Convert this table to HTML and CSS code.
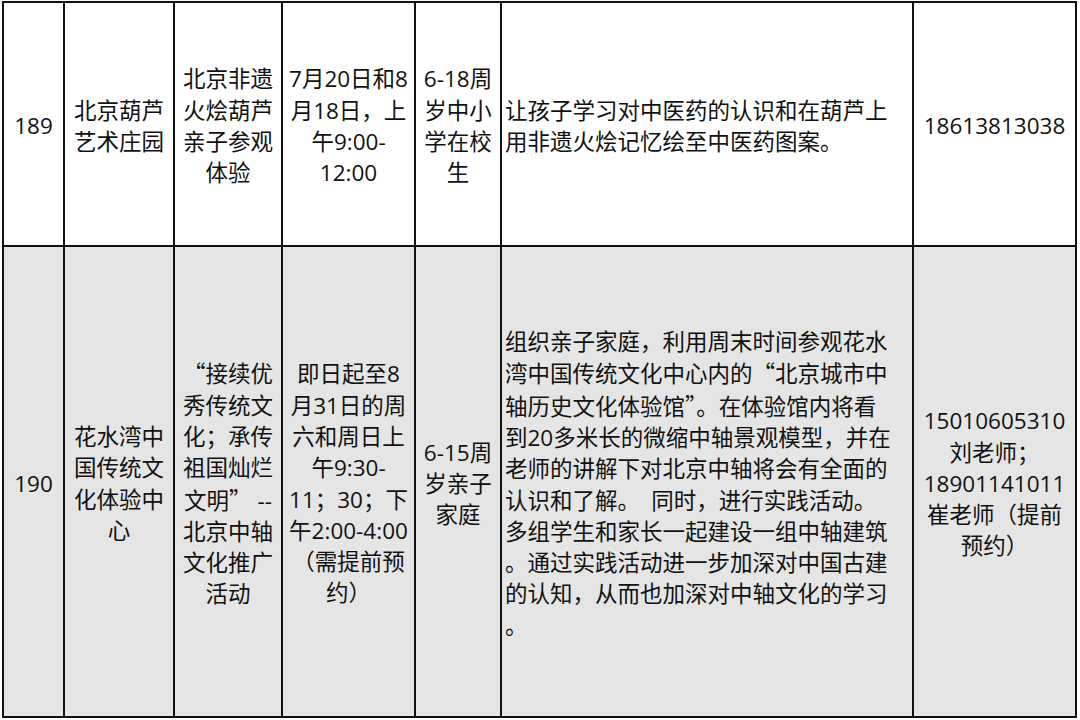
FILE: index.html
```html
<!DOCTYPE html>
<html lang="zh-CN">
<head>
<meta charset="utf-8">
<title>活动列表</title>
<link rel="stylesheet" href="styles.css">
</head>
<body>
<div class="sheet">
  <div class="cell"><div class="txt">189</div></div>
  <div class="cell"><div class="txt">北京葫芦<br>艺术庄园</div></div>
  <div class="cell"><div class="txt">北京非遗<br>火烩葫芦<br>亲子参观<br>体验</div></div>
  <div class="cell"><div class="txt">7月20日和8<br>月18日，上<br>午9:00-<br>12:00</div></div>
  <div class="cell"><div class="txt">6-18周<br>岁中小<br>学在校<br>生</div></div>
  <div class="cell left"><div class="txt">让孩子学习对中医药的认识和在葫芦上<br>用非遗火烩记忆绘至中医药图案。</div></div>
  <div class="cell"><div class="txt">18613813038</div></div>

  <div class="cell alt"><div class="txt">190</div></div>
  <div class="cell alt"><div class="txt">花水湾中<br>国传统文<br>化体验中<br>心</div></div>
  <div class="cell alt"><div class="txt"><span class="q">“</span>接续优<br>秀传统文<br>化；承传<br>祖国灿烂<br>文明<span class="q">”</span> --<br>北京中轴<br>文化推广<br>活动</div></div>
  <div class="cell alt"><div class="txt">即日起至8<br>月31日的周<br>六和周日上<br>午9:30-<br>11；30；下<br>午2:00-4:00<br>（需提前预<br>约）</div></div>
  <div class="cell alt"><div class="txt">6-15周<br>岁亲子<br>家庭</div></div>
  <div class="cell alt left"><div class="txt">组织亲子家庭，利用周末时间参观花水<br>湾中国传统文化中心内的<span class="q">“</span>北京城市中<br>轴历史文化体验馆<span class="q">”</span>。在体验馆内将看<br>到20多米长的微缩中轴景观模型，并在<br>老师的讲解下对北京中轴将会有全面的<br>认识和了解。　同时，进行实践活动。<br>多组学生和家长一起建设一组中轴建筑<br>。通过实践活动进一步加深对中国古建<br>的认知，从而也加深对中轴文化的学习<br>。</div></div>
  <div class="cell alt"><div class="txt">15010605310<br>刘老师；<br>18901141011<br>崔老师（提前<br>预约）</div></div>
</div>
</body>
</html>
```

FILE: styles.css
```css
html, body {
  margin: 0;
  padding: 0;
  background: #ffffff;
}

.sheet {
  display: grid;
  grid-template-columns: 59px 108px 106px 131px 84px 410px 161px;
  grid-template-rows: 242px 469px;
  gap: 2px;
  padding: 2px;
  margin: 1px 0 0 2px;
  width: fit-content;
  background: #111111;
  font-family: "Open Sans", "Noto Sans CJK SC", sans-serif;
  font-size: 22.5px;
  line-height: 31.3px;
  color: #111111;
}

.cell {
  background: #ffffff;
  display: flex;
  align-items: center;
  justify-content: center;
  text-align: center;
  white-space: nowrap;
  overflow: hidden;
  padding-top: 4px;
  box-sizing: border-box;
}

.cell.alt {
  background: #e5e5e5;
}

.cell.left {
  justify-content: flex-start;
  text-align: left;
  padding-left: 3px;
}

.q {
  font-family: "Noto Sans CJK SC", sans-serif;
}
```
